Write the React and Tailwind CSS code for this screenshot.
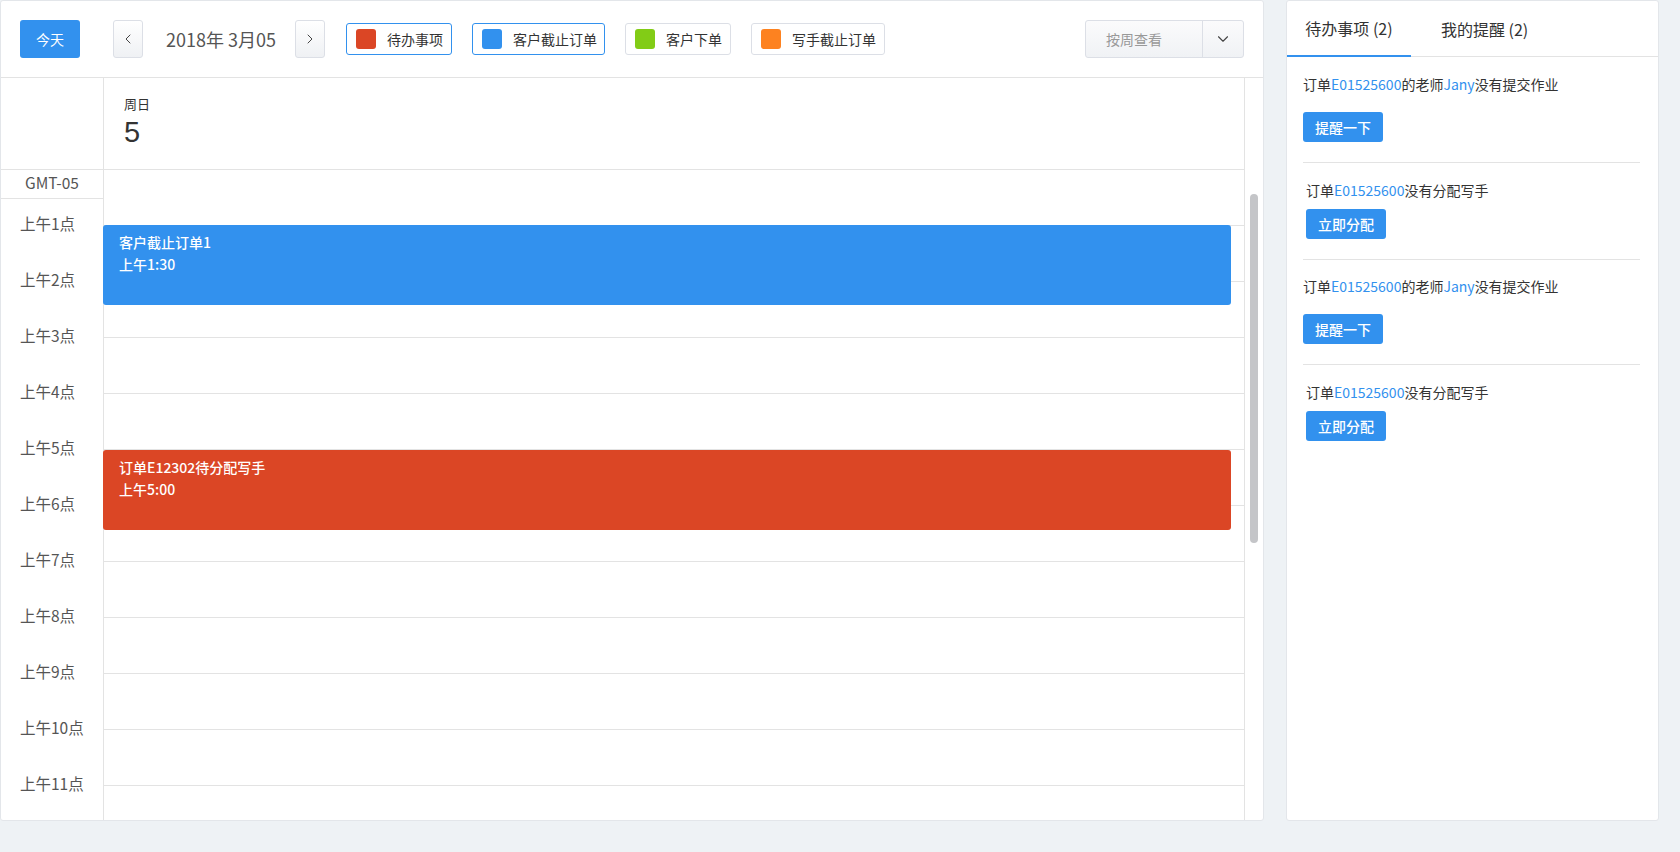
import { ChevronLeft, ChevronRight, ChevronDown } from 'lucide-react'

const legends = [
  { label: '待办事项', color: 'bg-[#db4625]', active: true, width: 'w-[106px]' },
  { label: '客户截止订单', color: 'bg-[#3291ee]', active: true, width: 'w-[133px]' },
  { label: '客户下单', color: 'bg-[#82cc16]', active: false, width: 'w-[106px]' },
  { label: '写手截止订单', color: 'bg-[#fd8220]', active: false, width: 'w-[134px]' },
]

const hours = ['上午1点', '上午2点', '上午3点', '上午4点', '上午5点', '上午6点', '上午7点', '上午8点', '上午9点', '上午10点', '上午11点']

const events = [
  { title: '客户截止订单1', time: '上午1:30', color: 'bg-[#3291ee]', top: 'top-[55px]' },
  { title: '订单E12302待分配写手', time: '上午5:00', color: 'bg-[#db4625]', top: 'top-[280px]' },
]

function NavButton({ children }) {
  return (
    <button
      type="button"
      className="w-[30px] h-[38px] flex items-center justify-center rounded-[3px] border border-[#dcdfe6] bg-gradient-to-b from-white to-[#eff1f4] text-[#444]"
    >
      {children}
    </button>
  )
}

function Calendar() {
  return (
    <div className="w-[1264px] h-full flex flex-col bg-white border border-[#e3e6ea] rounded-[3px] overflow-hidden">
      <div className="h-[77px] shrink-0 flex items-center pl-[19px] pr-[19px] border-b border-[#e3e3e3]">
        <button type="button" className="w-[60px] h-[38px] rounded-[3px] bg-[#3291ee] text-white text-[14px]">
          今天
        </button>
        <div className="ml-[33px]">
          <NavButton><ChevronLeft size={16} strokeWidth={1.5} /></NavButton>
        </div>
        <span className="ml-[23px] w-[109px] whitespace-nowrap text-[18px] text-[#555]">2018年 3月05</span>
        <div className="ml-[20px]">
          <NavButton><ChevronRight size={16} strokeWidth={1.5} /></NavButton>
        </div>
        <div className="ml-[21px] flex gap-[20px]">
          {legends.map((l) => (
            <div
              key={l.label}
              className={`${l.width} h-[32px] flex items-center gap-[11px] pl-[9px] rounded-[3px] border bg-white ${l.active ? 'border-[#3291ee]' : 'border-[#dcdfe6]'}`}
            >
              <span className={`w-[20px] h-[20px] rounded-[3px] ${l.color}`} />
              <span className="text-[14px] text-[#333] whitespace-nowrap">{l.label}</span>
            </div>
          ))}
        </div>
        <div className="ml-auto w-[159px] h-[38px] flex rounded-[3px] border border-[#dcdfe6] bg-gradient-to-b from-[#fbfbfc] to-[#f0f2f5]">
          <span className="flex-1 flex items-center pl-[20px] text-[14px] text-[#999]">按周查看</span>
          <span className="w-[41px] flex items-center justify-center border-l border-[#dcdfe6] text-[#444]">
            <ChevronDown size={18} strokeWidth={1.5} />
          </span>
        </div>
      </div>

      <div className="flex-1 flex min-h-0">
        <div className="w-[1244px] flex flex-col border-r border-[#e3e3e3]">
          <div className="h-[92px] shrink-0 flex border-b border-[#e3e3e3]">
            <div className="w-[103px] border-r border-[#e3e3e3]" />
            <div className="pl-[20px] pt-[17px] text-[#333]">
              <div className="text-[13px] leading-[18px]">周日</div>
              <div className="mt-[3px] text-[29px] leading-[32px] font-['Liberation_Sans',sans-serif]">5</div>
            </div>
          </div>
          <div className="flex-1 flex overflow-hidden">
            <div className="w-[103px] shrink-0 border-r border-[#e3e3e3] text-[15.5px] text-[#555]">
              <div className="h-[29px] flex items-center justify-center pb-[3px] border-b border-[#e3e3e3]">GMT-05</div>
              <div className="-mt-[3px]">
                {hours.map((h) => (
                  <div key={h} className="h-[56px] flex items-center pl-[19px] whitespace-nowrap">{h}</div>
                ))}
              </div>
            </div>
            <div className="flex-1 relative">
              {hours.map((h) => (
                <div key={h} className="h-[56px] border-b border-[#e3e3e3]" />
              ))}
              <div className="h-[56px] border-b border-[#e3e3e3]" />
              {events.map((e) => (
                <div
                  key={e.title}
                  className={`absolute left-[-1px] right-[13px] h-[80px] rounded-[3px] ${e.top} ${e.color} pl-[16px] pt-[7px] text-white text-[14px]`}
                >
                  <div className="leading-[20px] font-medium">{e.title}</div>
                  <div className="leading-[20px] mt-[2px] font-medium">{e.time}</div>
                </div>
              ))}
            </div>
          </div>
        </div>
        <div className="flex-1 pl-[5px]">
          <div className="mt-[116px] w-[8px] h-[349px] rounded-full bg-[#c4c5c8]" />
        </div>
      </div>
    </div>
  )
}

function Todo({ kind, pt, mt, last }) {
  const isRemind = kind === 'remind'
  return (
    <div className={`${pt} pb-[20px] ${isRemind ? '' : 'pl-[3px]'} ${last ? '' : 'border-b border-[#e3e3e3]'}`}>
      <div className="text-[14px] leading-[20px] text-[#333] whitespace-nowrap">
        订单<span className="text-[#3291ee]">E01525600</span>
        {isRemind ? (
          <>
            的老师<span className="text-[#3291ee]">Jany</span>没有提交作业
          </>
        ) : (
          '没有分配写手'
        )}
      </div>
      <button
        type="button"
        className={`${mt} w-[80px] h-[30px] rounded-[3px] bg-[#3291ee] text-white text-[14px] font-medium`}
      >
        {isRemind ? '提醒一下' : '立即分配'}
      </button>
    </div>
  )
}

function SidePanel() {
  return (
    <div className="w-[373px] h-full bg-white border border-[#e3e6ea] rounded-[3px] flex flex-col">
      <div className="h-[56px] shrink-0 flex border-b border-[#e3e3e3] text-[16px] text-[#333]">
        <div className="w-[124px] flex flex-col">
          <div className="flex-1 flex items-center justify-center">待办事项 (2)</div>
          <div className="h-[2px] bg-[#3291ee] -mb-px" />
        </div>
        <div className="pl-[30px] flex items-center">我的提醒 (2)</div>
      </div>
      <div className="pl-[16px] pr-[18px]">
        <Todo kind="remind" pt="pt-[17px]" mt="mt-[18px]" />
        <Todo kind="assign" pt="pt-[17px]" mt="mt-[9px]" />
        <Todo kind="remind" pt="pt-[16px]" mt="mt-[18px]" />
        <Todo kind="assign" pt="pt-[17px]" mt="mt-[9px]" last />
      </div>
    </div>
  )
}

export default function App() {
  return (
    <div className="w-[1680px] h-[852px] bg-[#eef2f5] flex gap-[22px] pb-[31px] font-['Noto_Sans_CJK_SC',sans-serif]">
      <Calendar />
      <SidePanel />
    </div>
  )
}
